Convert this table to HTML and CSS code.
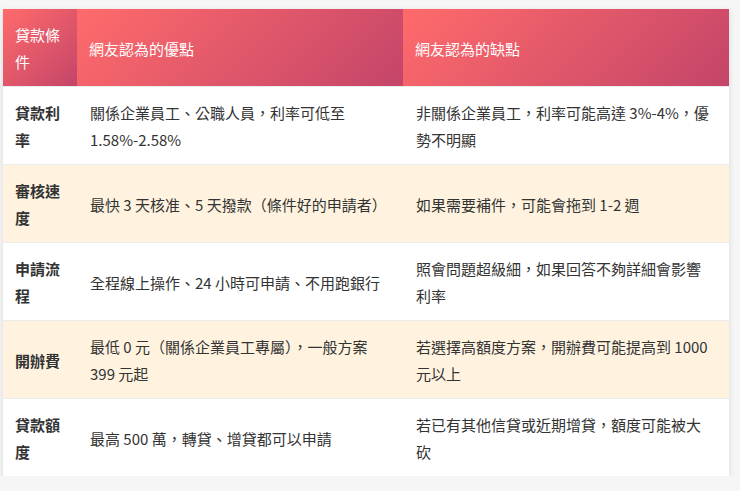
FILE: index.html
```html
<!DOCTYPE html>
<html lang="zh-Hant-TW">
<head>
<meta charset="utf-8">
<title>貸款比較</title>
<link rel="stylesheet" href="styles.css">
</head>
<body>
<table class="compare">
  <colgroup>
    <col class="c-label">
    <col class="c-text">
    <col class="c-text">
  </colgroup>
  <thead>
    <tr>
      <th>貸款條件</th>
      <th>網友認為的優點</th>
      <th>網友認為的缺點</th>
    </tr>
  </thead>
  <tbody>
    <tr>
      <td class="label">貸款利率</td>
      <td>關係企業員工、公職人員，利率可低至 1.58%-2.58%</td>
      <td>非關係企業員工，利率可能高達 3%-4%，優勢不明顯</td>
    </tr>
    <tr class="alt">
      <td class="label">審核速度</td>
      <td>最快 3 天核准、5 天撥款（條件好的申請者）</td>
      <td>如果需要補件，可能會拖到 1-2 週</td>
    </tr>
    <tr>
      <td class="label">申請流程</td>
      <td>全程線上操作、24 小時可申請、不用跑銀行</td>
      <td>照會問題超級細，如果回答不夠詳細會影響利率</td>
    </tr>
    <tr class="alt">
      <td class="label">開辦費</td>
      <td>最低 0 元（關係企業員工專屬），一般方案 399 元起</td>
      <td>若選擇高額度方案，開辦費可能提高到 1000 元以上</td>
    </tr>
    <tr>
      <td class="label">貸款額度</td>
      <td>最高 500 萬，轉貸、增貸都可以申請</td>
      <td>若已有其他信貸或近期增貸，額度可能被大砍</td>
    </tr>
  </tbody>
</table>
</body>
</html>
```

FILE: styles.css
```css
html, body {
  margin: 0;
  background: #f6f6f6;
}
body {
  padding: 9px 0 0 3px;
  font-family: "Noto Sans CJK TC", "Noto Sans", sans-serif;
  font-size: 15px;
  color: #333;
}
.compare {
  width: 726px;
  border-collapse: collapse;
  table-layout: fixed;
  background: #fff;
  box-shadow: 0 2px 6px rgba(0, 0, 0, 0.12);
}
.c-label { width: 74px; }
.c-text { width: 326px; }
.compare th,
.compare td {
  padding: 12px 16px 11px 13px;
  line-height: 27px;
  text-align: left;
  vertical-align: middle;
}
.compare th {
  background: linear-gradient(135deg, #ff6b6b 0%, #c44569 100%);
  color: #fff;
  font-weight: 400;
  padding-left: 12px;
}
.compare tbody tr {
  border-top: 1px solid #ececec;
  background: #fff;
}
.compare tbody tr.alt {
  background: #fff3e0;
}
.compare td.label {
  font-weight: 700;
  padding-left: 12px;
  padding-right: 12px;
}
```
